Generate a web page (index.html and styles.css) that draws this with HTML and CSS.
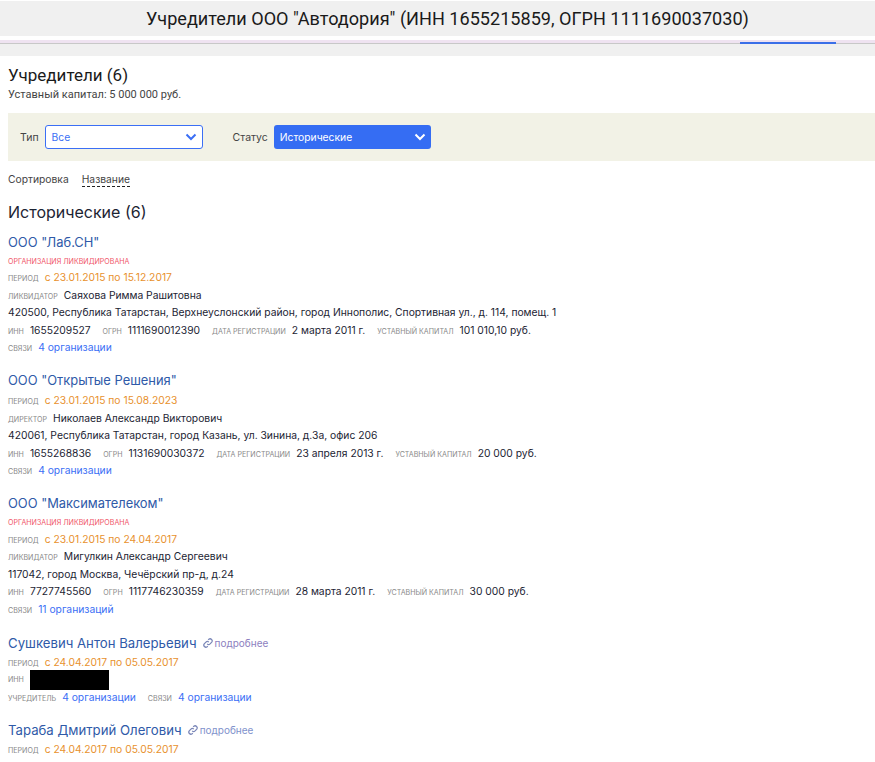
FILE: index.html
```html
<!DOCTYPE html>
<html lang="ru">
<head>
<meta charset="utf-8">
<title>Учредители</title>
<link rel="stylesheet" href="styles.css">
</head>
<body>
<header class="title-bar"><h1>Учредители ООО "Автодория" (ИНН 1655215859, ОГРН 1111690037030)</h1></header>
<div class="tabs"><span class="tab-active"></span></div>
<div class="gray-strip"></div>
<main class="content">
  <h2 class="page-title">Учредители (6)</h2>
  <p class="capital">Уставный капитал: 5 000 000 руб.</p>
  <div class="filters">
    <label class="filter-label">Тип</label>
    <div class="select select-light">Все<svg class="chev" width="12" height="8" viewBox="0 0 12 8"><path d="M1.500 1.500 6 6l4.500-4.500" fill="none" stroke="currentColor" stroke-width="2"/></svg></div>
    <label class="filter-label status-label">Статус</label>
    <div class="select select-solid">Исторические<svg class="chev" width="12" height="8" viewBox="0 0 12 8"><path d="M1.500 1.500 6 6l4.500-4.500" fill="none" stroke="currentColor" stroke-width="2"/></svg></div>
  </div>
  <div class="sort"><span>Сортировка</span><span class="sort-link">Название</span></div>
  <h3 class="section-title">Исторические (6)</h3>

  <article class="item">
    <a class="name">ООО "Лаб.СН"</a>
    <div class="row liquidated">организация ликвидирована</div>
    <div class="row"><span class="k">период</span><span class="period">с 23.01.2015 по 15.12.2017</span></div>
    <div class="row"><span class="k">ликвидатор</span><span>Саяхова Римма Рашитовна</span></div>
    <div class="row">420500, Республика Татарстан, Верхнеуслонский район, город Иннополис, Спортивная ул., д. 114, помещ. 1</div>
    <div class="row"><span class="k">инн</span><span class="v">1655209527</span><span class="k">огрн</span><span class="v">1111690012390</span><span class="k">дата регистрации</span><span class="v">2 марта 2011 г.</span><span class="k">уставный капитал</span><span>101 010,10 руб.</span></div>
    <div class="row"><span class="k">связи</span><a class="link">4 организации</a></div>
  </article>

  <article class="item">
    <a class="name">ООО "Открытые Решения"</a>
    <div class="row"><span class="k">период</span><span class="period">с 23.01.2015 по 15.08.2023</span></div>
    <div class="row"><span class="k">директор</span><span>Николаев Александр Викторович</span></div>
    <div class="row">420061, Республика Татарстан, город Казань, ул. Зинина, д.3а, офис 206</div>
    <div class="row"><span class="k">инн</span><span class="v">1655268836</span><span class="k">огрн</span><span class="v">1131690030372</span><span class="k">дата регистрации</span><span class="v">23 апреля 2013 г.</span><span class="k">уставный капитал</span><span>20 000 руб.</span></div>
    <div class="row"><span class="k">связи</span><a class="link">4 организации</a></div>
  </article>

  <article class="item">
    <a class="name">ООО "Максимателеком"</a>
    <div class="row liquidated">организация ликвидирована</div>
    <div class="row"><span class="k">период</span><span class="period">с 23.01.2015 по 24.04.2017</span></div>
    <div class="row"><span class="k">ликвидатор</span><span>Мигулкин Александр Сергеевич</span></div>
    <div class="row">117042, город Москва, Чечёрский пр-д, д.24</div>
    <div class="row"><span class="k">инн</span><span class="v">7727745560</span><span class="k">огрн</span><span class="v">1117746230359</span><span class="k">дата регистрации</span><span class="v">28 марта 2011 г.</span><span class="k">уставный капитал</span><span>30 000 руб.</span></div>
    <div class="row"><span class="k">связи</span><a class="link">11 организаций</a></div>
  </article>

  <article class="item">
    <div class="person"><a class="name person-name">Сушкевич Антон Валерьевич</a><svg class="chain" width="10" height="10" viewBox="0 0 24 24"><path d="M10 14a5 5 0 0 0 7 0l4-4a5 5 0 0 0-7-7l-1.500 1.500M14 10a5 5 0 0 0-7 0l-4 4a5 5 0 0 0 7 7l1.500-1.500" fill="none" stroke="currentColor" stroke-width="3"/></svg><a class="more more-visited">подробнее</a></div>
    <div class="row"><span class="k">период</span><span class="period">с 24.04.2017 по 05.05.2017</span></div>
    <div class="row"><span class="k">инн</span><span class="redacted"></span></div>
    <div class="row"><span class="k">учредитель</span><a class="link link-gap">4 организации</a><span class="k">связи</span><a class="link">4 организации</a></div>
  </article>

  <article class="item">
    <div class="person"><a class="name person-name">Тараба Дмитрий Олегович</a><svg class="chain" width="10" height="10" viewBox="0 0 24 24"><path d="M10 14a5 5 0 0 0 7 0l4-4a5 5 0 0 0-7-7l-1.500 1.500M14 10a5 5 0 0 0-7 0l-4 4a5 5 0 0 0 7 7l1.500-1.500" fill="none" stroke="currentColor" stroke-width="3"/></svg><a class="more">подробнее</a></div>
    <div class="row"><span class="k">период</span><span class="period">с 24.04.2017 по 05.05.2017</span></div>
  </article>
</main>
</body>
</html>
```
FILE: styles.css
```css
* { box-sizing: border-box; }
html, body { margin: 0; padding: 0; height: 762px; overflow: hidden; background: #fff; }
body { font-family: Inter, "Noto Sans", sans-serif; color: #1c2433; font-size: 10.3px; }
h1, h2, h3, p { margin: 0; font-weight: 400; }
.title-bar { margin-top: 1px; height: 35px; background: #f0f0f0; display: flex; align-items: center; justify-content: center; padding-left: 20px; }
.title-bar h1 { font-family: Roboto, sans-serif; font-size: 18.1px; color: #1a1a1a; }
.tabs { margin-top: 4px; height: 4px; background: linear-gradient(#efe3f1 0 3px, #c8c8c8 3px); position: relative; }
.tab-active { position: absolute; left: 740px; top: 2px; width: 96px; height: 2px; background: #3b6fe8; }
.gray-strip { height: 12px; background: #f0f0f0; }
.content { padding: 10px 0 0 8px; }
.page-title { font-family: Roboto, sans-serif; font-size: 17px; line-height: 19px; color: #1a1a1a; }
.capital { font-family: Roboto, sans-serif; font-size: 11px; line-height: 12px; margin-top: 4px; color: #444; }
.filters { margin-top: 12px; height: 48px; background: #f2f2e6; display: flex; align-items: center; padding-left: 12px; }
.filter-label { color: #444; font-size: 10.5px; margin-right: 6px; }
.status-label { margin-left: 30px; margin-right: 6px; }
.select { width: 158px; height: 24px; border-radius: 3px; display: flex; align-items: center; justify-content: space-between; padding: 0 5px 0 6px; font-size: 10.3px; }
.select-light { background: #fff; border: 1px solid #3b6ff5; color: #3b6ff5; }
.select-solid { background: #356df3; color: #fff; width: 157px; }
.sort { display: flex; gap: 13px; margin-top: 12px; line-height: 13px; color: #444; }
.sort-link { border-bottom: 1px dashed #222; }
.section-title { font-size: 16px; line-height: 20px; margin-top: 15px; color: #1c2433; }
.item { margin-bottom: 13px; }
.section-title + .item { margin-top: 9.500px; }
.name { color: #2f5aa8; font-size: 12.900px; line-height: 22px; display: block; }
.person-name { font-size: 13.200px; }
.row { display: flex; align-items: baseline; height: 17.600px; line-height: 17.600px; color: #1c2433; white-space: nowrap; }
.k { font-size: 7.100px; text-transform: uppercase; color: #8a8a8a; margin-right: 6px; }
.v { margin-right: 12px; }
.period { color: #e8912d; font-size: 10.300px; }
.link { color: #3b6ff5; }
.link-gap { margin-right: 12px; }
.row.liquidated { font-size: 7.100px; text-transform: uppercase; color: #f0566a; height: 15.600px; line-height: 15.600px; }
.person { display: flex; align-items: center; }
.person .name { margin-right: 6px; }
.chain { color: #7a86b8; margin-right: 2px; }
.more { color: #7f92cc; font-size: 10px; }
.more-visited { color: #8d7fc0; }
.redacted { display: block; width: 79px; height: 20px; background: #000; align-self: center; }
```
